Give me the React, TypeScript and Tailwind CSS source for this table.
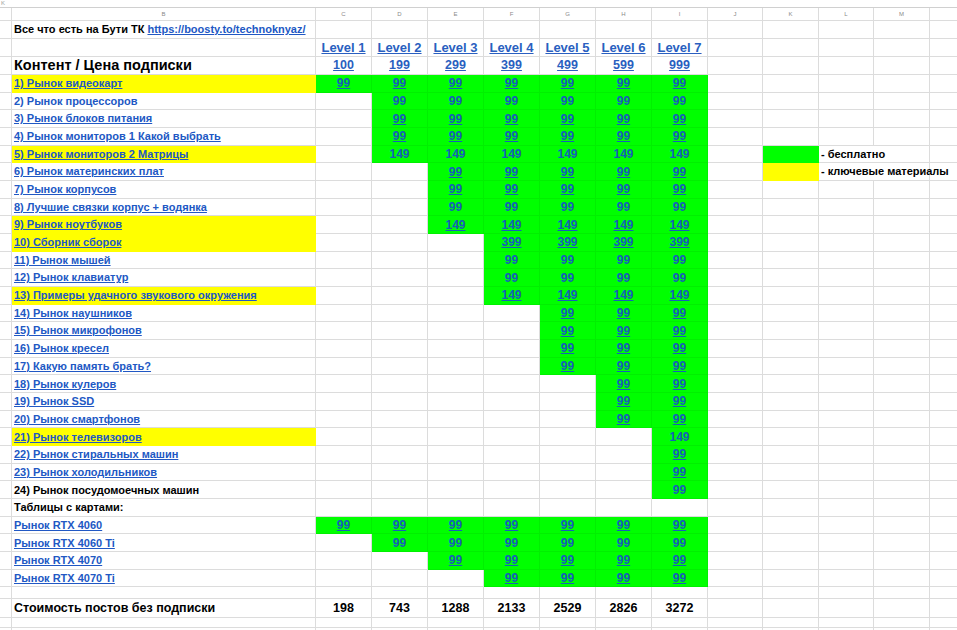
import React from "react";

type Row = {
  label: string;
  yellow?: boolean;
  start: number;
  val: string;
  u: boolean;
  lu: boolean;
  black?: boolean;
};

const rows: Row[] = [
  { label: "1) Рынок видеокарт", yellow: true, start: 1, val: "99", u: true, lu: true },
  { label: "2) Рынок процессоров", start: 2, val: "99", u: false, lu: false },
  { label: "3) Рынок блоков питания", start: 2, val: "99", u: true, lu: true },
  { label: "4) Рынок мониторов 1 Какой выбрать", start: 2, val: "99", u: true, lu: true },
  { label: "5) Рынок мониторов 2 Матрицы", yellow: true, start: 2, val: "149", u: false, lu: true },
  { label: "6) Рынок материнских плат", start: 3, val: "99", u: true, lu: true },
  { label: "7) Рынок корпусов", start: 3, val: "99", u: true, lu: true },
  { label: "8) Лучшие связки корпус + водянка", start: 3, val: "99", u: false, lu: true },
  { label: "9) Рынок ноутбуков", yellow: true, start: 3, val: "149", u: true, lu: true },
  { label: "10) Сборник сборок", yellow: true, start: 4, val: "399", u: true, lu: true },
  { label: "11) Рынок мышей", start: 4, val: "99", u: false, lu: true },
  { label: "12) Рынок клавиатур", start: 4, val: "99", u: false, lu: true },
  { label: "13) Примеры удачного звукового окружения", yellow: true, start: 4, val: "149", u: true, lu: true },
  { label: "14) Рынок наушников", start: 5, val: "99", u: true, lu: true },
  { label: "15) Рынок микрофонов", start: 5, val: "99", u: true, lu: true },
  { label: "16) Рынок кресел", start: 5, val: "99", u: true, lu: true },
  { label: "17) Какую память брать?", start: 5, val: "99", u: true, lu: true },
  { label: "18) Рынок кулеров", start: 6, val: "99", u: true, lu: true },
  { label: "19) Рынок SSD", start: 6, val: "99", u: true, lu: true },
  { label: "20) Рынок смартфонов", start: 6, val: "99", u: true, lu: true },
  { label: "21) Рынок телевизоров", yellow: true, start: 7, val: "149", u: false, lu: true },
  { label: "22) Рынок стиральных машин", start: 7, val: "99", u: true, lu: true },
  { label: "23) Рынок холодильников", start: 7, val: "99", u: true, lu: true },
  { label: "24) Рынок посудомоечных машин", start: 7, val: "99", u: false, lu: false, black: true },
  { label: "Таблицы с картами:", start: 99, val: "", u: false, lu: false, black: true },
  { label: "Рынок RTX 4060", start: 1, val: "99", u: true, lu: true },
  { label: "Рынок RTX 4060 Ti", start: 2, val: "99", u: false, lu: true },
  { label: "Рынок RTX 4070", start: 3, val: "99", u: true, lu: true },
  { label: "Рынок RTX 4070 Ti", start: 4, val: "99", u: true, lu: true },
];

const levels = ["Level 1", "Level 2", "Level 3", "Level 4", "Level 5", "Level 6", "Level 7"];
const prices = ["100", "199", "299", "399", "499", "599", "999"];
const totals = ["198", "743", "1288", "2133", "2529", "2826", "3272"];
const colLetters = ["C", "D", "E", "F", "G", "H", "I"];

const FONT = { fontFamily: '"Liberation Sans", Arial, sans-serif' };

function Empty({ w }: { w: string }) {
  return <div className={`${w} shrink-0 h-full border-r border-b border-[#dcdcdc]`} />;
}

function Tail() {
  return (
    <>
      <Empty w="w-[55px]" />
      <Empty w="w-[56px]" />
      <Empty w="w-[55px]" />
      <Empty w="w-[56px]" />
      <div className="flex-1 h-full border-b border-[#dcdcdc]" />
    </>
  );
}

function ColA() {
  return <div className="w-[12px] shrink-0 h-full border-r border-b border-[#dcdcdc]" />;
}

function BlankRow({ h }: { h: string }) {
  return (
    <div className={`${h} flex`}>
      <ColA />
      <Empty w="w-[304px]" />
      {colLetters.map((c) => (
        <Empty key={c} w="w-[56px]" />
      ))}
      <Tail />
    </div>
  );
}

export default function App() {
  return (
    <div className="w-[957px] h-[630px] overflow-hidden bg-white text-black" style={FONT}>
      {/* top strip */}
      <div className="h-[8px] border-b border-[#d0d0d0] flex items-start pl-[1px]">
        <span className="text-[6px] leading-[6px] text-[#a0a0a0]">K</span>
      </div>
      {/* column header row */}
      <div className="h-[13px] flex text-[6px] text-[#8a8a8a]">
        <ColA />
        <div className="w-[304px] shrink-0 h-full border-r border-b border-[#dcdcdc] flex items-center justify-center">B</div>
        {colLetters.map((c) => (
          <div key={c} className="w-[56px] shrink-0 h-full border-r border-b border-[#dcdcdc] flex items-center justify-center">
            {c}
          </div>
        ))}
        <div className="w-[55px] shrink-0 h-full border-r border-b border-[#dcdcdc] flex items-center justify-center">J</div>
        <div className="w-[56px] shrink-0 h-full border-r border-b border-[#dcdcdc] flex items-center justify-center">K</div>
        <div className="w-[55px] shrink-0 h-full border-r border-b border-[#dcdcdc] flex items-center justify-center">L</div>
        <div className="w-[56px] shrink-0 h-full border-r border-b border-[#dcdcdc] flex items-center justify-center">M</div>
        <div className="flex-1 h-full border-b border-[#dcdcdc]" />
      </div>

      {/* row 1 */}
      <div className="h-[18px] flex">
        <ColA />
        <div className="w-[304px] shrink-0 h-full border-r border-b border-[#dcdcdc] flex items-center pl-[2px] text-[11px] font-bold whitespace-nowrap">
          <span>Все что есть на Бути ТК&nbsp;</span>
          <span className="text-[#2158c4] underline">https://boosty.to/technoknyaz/</span>
        </div>
        {colLetters.map((c) => (
          <Empty key={c} w="w-[56px]" />
        ))}
        <Tail />
      </div>

      {/* row 2 levels */}
      <div className="h-[18px] flex">
        <ColA />
        <Empty w="w-[304px]" />
        {levels.map((l) => (
          <div key={l} className="w-[56px] shrink-0 h-full border-r border-b border-[#dcdcdc] flex items-end justify-center text-[13px] font-bold text-[#2a5fc0] underline leading-[16px]">
            {l}
          </div>
        ))}
        <Tail />
      </div>

      {/* row 3 prices */}
      <div className="h-[18px] flex">
        <ColA />
        <div className="w-[304px] shrink-0 h-full border-r border-b border-[#dcdcdc] flex items-center pl-[2px] text-[14.5px] font-bold whitespace-nowrap">
          Контент / Цена подписки
        </div>
        {prices.map((p) => (
          <div key={p} className="w-[56px] shrink-0 h-full border-r border-b border-[#dcdcdc] flex items-center justify-center text-[12.5px] font-bold text-[#2a5fc0] underline">
            {p}
          </div>
        ))}
        <Tail />
      </div>

      {rows.map((r, i) => (
        <div key={i} className="h-[17.68px] flex">
          <ColA />
          <div
            className={`w-[304px] shrink-0 h-full border-r border-b flex items-center pl-[2px] text-[11px] font-bold whitespace-nowrap ${
              r.yellow ? "bg-[#ffff00] border-[#ffff00]" : "border-[#dcdcdc]"
            } ${r.black ? "text-black" : "text-[#2158c4]"} ${r.lu ? "underline" : ""}`}
          >
            {r.label}
          </div>
          {[1, 2, 3, 4, 5, 6, 7].map((lv) => {
            const on = lv >= r.start;
            return (
              <div
                key={lv}
                className={`w-[56px] shrink-0 h-full border-r border-b flex items-center justify-center text-[12px] font-bold ${
                  on ? "bg-[#00ff00] border-[#00f000] text-[#1560b8]" : "border-[#dcdcdc]"
                } ${r.u ? "underline" : ""}`}
              >
                {on ? r.val : ""}
              </div>
            );
          })}
          {i === 4 ? (
            <>
              <Empty w="w-[55px]" />
              <div className="w-[56px] shrink-0 h-full bg-[#00ff00] border-r border-b border-[#00ff00]" />
              <div className="w-[111px] shrink-0 h-full border-b border-r border-[#dcdcdc] flex items-center pl-[2px] text-[11px] font-bold whitespace-nowrap">
                - бесплатно
              </div>
              <div className="flex-1 h-full border-b border-[#dcdcdc]" />
            </>
          ) : i === 5 ? (
            <>
              <Empty w="w-[55px]" />
              <div className="w-[56px] shrink-0 h-full bg-[#ffff00] border-r border-b border-[#ffff00]" />
              <div className="w-[111px] shrink-0 h-full border-b border-r border-[#dcdcdc] flex items-center pl-[2px] text-[11px] font-bold whitespace-nowrap">
                - ключевые материалы
              </div>
              <div className="flex-1 h-full border-b border-[#dcdcdc]" />
            </>
          ) : (
            <Tail />
          )}
        </div>
      ))}

      <BlankRow h="h-[11.3px]" />

      {/* totals */}
      <div className="h-[19.3px] flex">
        <ColA />
        <div className="w-[304px] shrink-0 h-full border-r border-b border-[#dcdcdc] flex items-center pl-[2px] text-[12.5px] font-bold whitespace-nowrap">
          Стоимость постов без подписки
        </div>
        {totals.map((t) => (
          <div key={t} className="w-[56px] shrink-0 h-full border-r border-b border-[#dcdcdc] flex items-center justify-center text-[12.5px] font-bold">
            {t}
          </div>
        ))}
        <Tail />
      </div>

      <BlankRow h="h-[10px]" />
      <BlankRow h="h-[10px]" />
    </div>
  );
}
